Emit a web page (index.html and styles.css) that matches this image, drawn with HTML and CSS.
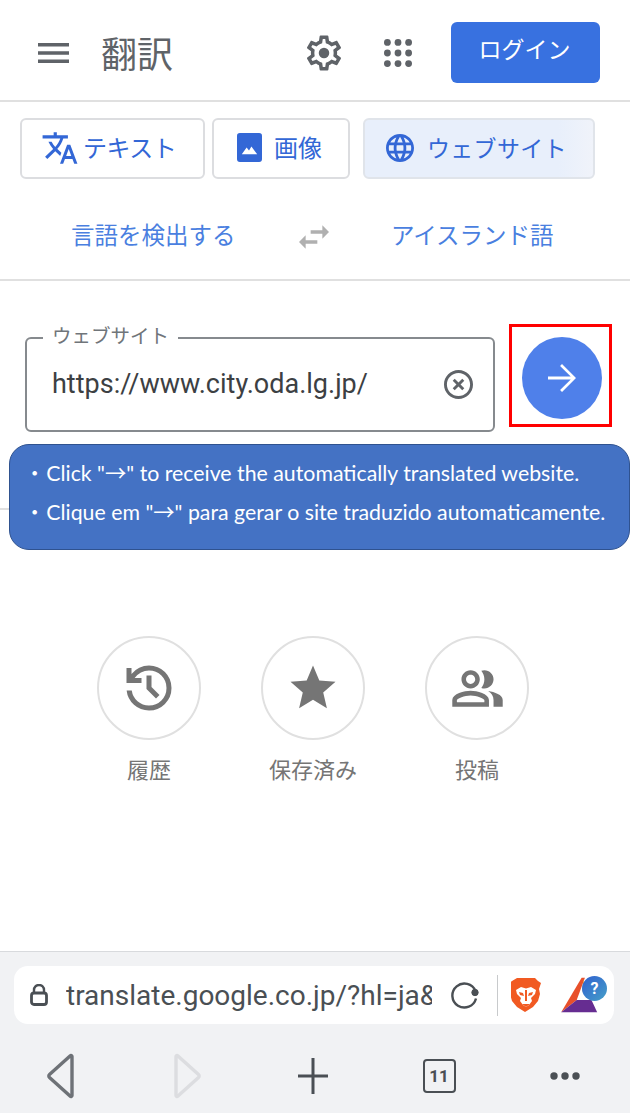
FILE: index.html
```html
<!DOCTYPE html>
<html lang="ja">
<head>
    <meta charset="UTF-8">
    <meta name="viewport" content="width=device-width, initial-scale=1.0">
    <title>翻訳</title>
    <link rel="stylesheet" href="styles.css">
</head>
<body>

<div class="page">
    <header class="topbar">
        <svg class="icon-menu" viewBox="0 0 31 20"><path d="M0 0h31v3.4H0zM0 8.3h31v3.4H0zM0 16.6h31V20H0z"/></svg>
        <h1 class="title">翻訳</h1>
        <svg class="icon-gear" viewBox="0 0 24 24"><path d="M19.43 12.98c.04-.32.07-.64.07-.98 0-.34-.03-.66-.07-.98l2.11-1.65c.19-.15.24-.42.12-.64l-2-3.46c-.09-.16-.26-.25-.44-.25-.06 0-.12.01-.17.03l-2.49 1c-.52-.4-1.08-.73-1.69-.98l-.38-2.65C14.46 2.18 14.25 2 14 2h-4c-.25 0-.46.18-.49.42l-.38 2.65c-.61.25-1.17.59-1.69.98l-2.49-1c-.06-.02-.12-.03-.18-.03-.17 0-.34.09-.43.25l-2 3.46c-.13.22-.07.49.12.64l2.11 1.65c-.04.32-.07.65-.07.98 0 .33.03.66.07.98l-2.11 1.65c-.19.15-.24.42-.12.64l2 3.46c.09.16.26.25.44.25.06 0 .12-.01.17-.03l2.49-1c.52.4 1.08.73 1.69.98l.38 2.65c.03.24.24.42.49.42h4c.25 0 .46-.18.49-.42l.38-2.65c.61-.25 1.17-.59 1.69-.98l2.49 1c.06.02.12.03.18.03.17 0 .34-.09.43-.25l2-3.46c.12-.22.07-.49-.12-.64l-2.11-1.65zm-1.98-1.71c.04.31.05.52.05.73 0 .21-.02.43-.05.73l-.14 1.13.89.7 1.08.84-.7 1.21-1.27-.51-1.04-.42-.9.68c-.43.32-.84.56-1.25.73l-1.06.43-.16 1.13-.2 1.35h-1.4l-.19-1.35-.16-1.13-1.06-.43c-.43-.18-.83-.41-1.23-.71l-.91-.7-1.06.43-1.27.51-.7-1.21 1.08-.84.89-.7-.14-1.13c-.03-.31-.05-.54-.05-.74s.02-.43.05-.73l.14-1.13-.89-.7-1.08-.84.7-1.21 1.27.51 1.04.42.9-.68c.43-.32.84-.56 1.25-.73l1.06-.43.16-1.13.2-1.35h1.39l.19 1.35.16 1.13 1.06.43c.43.18.83.41 1.23.71l.91.7 1.06-.43 1.27-.51.7 1.21-1.07.85-.89.7.14 1.13z"/><circle cx="12" cy="12" r="3"/></svg>
        <svg class="icon-apps" viewBox="0 0 28 28"><circle cx="3.4" cy="3.4" r="3.4"/><circle cx="14" cy="3.4" r="3.4"/><circle cx="24.6" cy="3.4" r="3.4"/><circle cx="3.4" cy="14" r="3.4"/><circle cx="14" cy="14" r="3.4"/><circle cx="24.6" cy="14" r="3.4"/><circle cx="3.4" cy="24.6" r="3.4"/><circle cx="14" cy="24.6" r="3.4"/><circle cx="24.6" cy="24.6" r="3.4"/></svg>
        <button class="login">ログイン</button>
    </header>

    <nav class="tabs">
        <div class="tab tab-text">
            <svg class="tab-icon" viewBox="0 0 24 24"><path d="M12.87 15.07l-2.54-2.51.03-.03c1.74-1.94 2.98-4.17 3.71-6.53H17V4h-7V2H8v2H1v1.99h11.17C11.5 7.92 10.44 9.75 9 11.35 8.07 10.32 7.3 9.19 6.69 8h-2c.73 1.63 1.73 3.17 2.98 4.56l-5.09 5.02L4 19l5-5 3.11 3.11.76-2.04zM18.5 10h-2L12 22h2l1.12-3h4.75L21 22h2l-4.5-12zm-2.62 7l1.62-4.33L19.12 17h-3.24z"/></svg>
            テキスト
        </div>
        <div class="tab tab-image">
            <svg class="tab-icon" viewBox="0 0 26 30"><rect width="26" height="30" rx="3"/><path fill="#fff" d="M5 22l5-7 2.5 3 2.5-4 6 8z"/></svg>
            画像
        </div>
        <div class="tab tab-site">
            <svg class="tab-icon" viewBox="2 2 20 20"><path d="M11.99 2C6.47 2 2 6.48 2 12s4.47 10 9.99 10C17.52 22 22 17.52 22 12S17.52 2 11.99 2zm6.93 6h-2.95c-.32-1.25-.78-2.45-1.38-3.56 1.84.63 3.37 1.91 4.33 3.56zM12 4.04c.83 1.2 1.48 2.53 1.91 3.96h-3.82c.43-1.43 1.08-2.76 1.91-3.96zM4.26 14C4.1 13.36 4 12.69 4 12s.1-1.36.26-2h3.38c-.08.66-.14 1.32-.14 2 0 .68.06 1.34.14 2H4.26zm.82 2h2.95c.32 1.25.78 2.45 1.38 3.56-1.84-.63-3.37-1.9-4.33-3.56zm2.95-8H5.08c.96-1.66 2.49-2.93 4.33-3.56C8.81 5.55 8.35 6.75 8.03 8zM12 19.96c-.83-1.2-1.48-2.53-1.91-3.96h3.82c-.43 1.43-1.08 2.76-1.91 3.96zM14.34 14H9.66c-.09-.66-.16-1.32-.16-2 0-.68.07-1.35.16-2h4.68c.09.65.16 1.32.16 2 0 .68-.07 1.34-.16 2zm.25 5.56c.6-1.11 1.06-2.31 1.38-3.56h2.95c-.96 1.65-2.49 2.93-4.33 3.56zM16.36 14c.08-.66.14-1.32.14-2 0-.68-.06-1.34-.14-2h3.38c.16.64.26 1.31.26 2s-.1 1.36-.26 2h-3.38z"/></svg>
            ウェブサイト
        </div>
    </nav>

    <div class="langs">
        <span class="lang">言語を検出する</span>
        <svg class="icon-swap" viewBox="3 5 18 14"><path d="M6.99 11L3 15l3.99 4v-3H14v-2H6.99v-3zM21 9l-3.99-4v3H10v2h7.01v3L21 9z"/></svg>
        <span class="lang">アイスランド語</span>
    </div>

    <section class="site-entry">
        <div class="site-field">
            <span class="site-label">ウェブサイト</span>
            <span class="site-url">https://www.city.oda.lg.jp/</span>
            <svg class="icon-clear" viewBox="2 2 20 20"><path d="M14.59 8L12 10.59 9.41 8 8 9.41 10.59 12 8 14.59 9.41 16 12 13.41 14.59 16 16 14.59 13.41 12 16 9.41 14.59 8zM12 2C6.47 2 2 6.47 2 12s4.47 10 10 10 10-4.47 10-10S17.53 2 12 2zm0 18c-4.41 0-8-3.59-8-8s3.59-8 8-8 8 3.59 8 8-3.59 8-8 8z"/></svg>
        </div>
        <button class="go">
            <svg class="icon-go" viewBox="4 4 16 16"><path d="M12 4l-1.1 1.1L17 11.2H4v1.6h13l-6.100 6.100L12 20l8-8z"/></svg>
        </button>
    </section>

    <div class="shortcuts">
        <div class="shortcut">
            <div class="shortcut-ring">
                <svg class="icon-history" viewBox="0 0 24 24"><path d="M12 21q-3.45 0-6.012-2.288T3.05 13H5.100q.35 2.6 2.313 4.3T12 19q2.925 0 4.963-2.038T19 12q0-2.925-2.037-4.962T12 5q-1.725 0-3.225.8T6.250 8H9v2H3V4h2v2.350q1.275-1.600 3.113-2.475T12 3q3.750 0 6.375 2.625T21 12q0 3.750-2.625 6.375T12 21Zm2.800-4.800L11 12.400V7h2v4.600l3.200 3.200-1.400 1.400Z"/></svg>
            </div>
            <span>履歴</span>
        </div>
        <div class="shortcut">
            <div class="shortcut-ring">
                <svg class="icon-star" viewBox="0 0 24 24"><path d="M12 17.27L18.18 21l-1.64-7.03L22 9.24l-7.19-.61L12 2 9.19 8.63 2 9.24l5.46 4.73L5.82 21z"/></svg>
            </div>
            <span>保存済み</span>
        </div>
        <div class="shortcut">
            <div class="shortcut-ring">
                <svg class="icon-people" viewBox="0 0 24 24"><path d="M16.67 13.13C18.04 14.06 19 15.32 19 17v3h4v-3c0-2.180-3.570-3.470-6.330-3.870zM15 12c2.210 0 4-1.790 4-4s-1.790-4-4-4c-.47 0-.91.1-1.330.24C14.500 5.270 15 6.580 15 8s-.5 2.730-1.330 3.760c.42.14.86.24 1.330.24zM9 12c2.210 0 4-1.790 4-4s-1.790-4-4-4-4 1.790-4 4 1.790 4 4 4zm0-6c1.100 0 2 .9 2 2s-.9 2-2 2-2-.9-2-2 .9-2 2-2zM9 13c-2.670 0-8 1.340-8 4v3h16v-3c0-2.660-5.330-4-8-4zm6 5H3v-.99C3.200 16.290 6.300 15 9 15s5.800 1.290 6 2z"/></svg>
            </div>
            <span>投稿</span>
        </div>
    </div>

    <!-- callout pasted over the screenshot -->
    <div class="callout">
        <p><span class="dot">・</span>Click "<span class="arrow">→</span>" to receive the automatically translated website.</p>
        <p><span class="dot">・</span>Clique em "<span class="arrow">→</span>" para gerar o site traduzido automaticamente.</p>
    </div>
    <div class="marker"></div>
</div>

<footer class="browser">
    <div class="address">
        <svg class="icon-lock" viewBox="0 0 18 22"><path d="M4 9V6a5 5 0 0 1 10 0v3" fill="none" stroke-width="2.400"/><rect x="1.500" y="9" width="15" height="11.500" rx="2.500" fill="none" stroke-width="2.800"/></svg>
        <span class="address-url">translate.google.co.jp/?hl=ja&amp;sl=auto</span>
        <svg class="icon-reload" viewBox="0 0 30 30"><path d="M25.500 11A12 12 0 1 0 26 18.500" fill="none" stroke-width="2.400"/><circle cx="25" cy="12.500" r="3.200"/></svg>
        <span class="address-sep"></span>
        <svg class="icon-brave" viewBox="0 0 30 36"><path fill="#f15a22" d="M6 1h18l3 3 3 2-2 6 1 5-2 7-5 6-8 5-8-5-5-6-2-7 1-5-2-6 3-2z"/><path fill="#fff" d="M5 13l5-3 5 1.500 5-1.500 5 3-1 4-4 4 1 3-3 4-3 2-3-2-3-4 1-3-4-4z"/><path fill="#f15a22" d="M8 15l4 1 1 3-4-1zM22 15l-4 1-1 3 4-1zM14 13h2v11h-2zM11 27h8l-4 3z"/></svg>
        <div class="rewards">
            <svg class="icon-rewards" viewBox="0 0 46 44"><path fill="#e8502a" d="M0 43L25 1h4L19 28z"/><path fill="#f7a01c" d="M27 3l3 12-4 3z"/><path fill="#662d91" d="M0 43l19-15h18l7 15z"/></svg>
            <span class="rewards-badge">?</span>
        </div>
    </div>
    <div class="browser-nav">
        <svg class="nav-icon nav-back" viewBox="0 0 30 46"><path d="M26 3.500v39a1 1 0 0 1-1.700.7L3.500 24.500a2 2 0 0 1 0-3L24.300 2.800A1 1 0 0 1 26 3.500z"/></svg>
        <svg class="nav-icon nav-forward" viewBox="0 0 30 46"><path d="M4 3.500v39a1 1 0 0 0 1.700.7L26.500 24.500a2 2 0 0 0 0-3L5.700 2.800A1 1 0 0 0 4 3.500z"/></svg>
        <svg class="nav-icon nav-plus" viewBox="0 0 30 36"><path d="M15 0v36M0 18h30"/></svg>
        <div class="tab-count">11</div>
        <svg class="nav-more" viewBox="0 0 30 8"><circle cx="4" cy="4" r="3.700"/><circle cx="15" cy="4" r="3.700"/><circle cx="26" cy="4" r="3.700"/></svg>
    </div>
</footer>

</body>
</html>
```

FILE: styles.css
```css
* {
    box-sizing: border-box;
}

html, body {
    height: 100%;
}

body {
    margin: 0;
    height: 1113px;
    display: flex;
    flex-direction: column;
    overflow: hidden;
    background-color: white;
    font-family: Roboto, "Noto Sans CJK JP", sans-serif;
}

.page {
    position: relative;
    flex: 1;
}

/* top bar */
.topbar {
    height: 102px;
    display: flex;
    align-items: center;
    padding: 5px 30px 0 38px;
    border-bottom: 2px solid #e0e0e0;
}

.icon-menu {
    width: 31px;
    height: 20px;
    fill: #5f6368;
}

.title {
    margin: 6px 0 0 32px;
    flex: 1;
    font-size: 36px;
    font-weight: 400;
    line-height: 40px;
    color: #5f6368;
}

.icon-gear {
    width: 42px;
    height: 42px;
    fill: #5f6368;
}

.icon-apps {
    width: 28px;
    height: 28px;
    margin-left: 39px;
    fill: #5f6368;
}

.login {
    width: 149px;
    height: 61px;
    margin-left: 39px;
    padding: 0 2px 10px 0;
    border: none;
    border-radius: 6px;
    background-color: #3871e0;
    color: white;
    font-family: inherit;
    font-size: 23px;
}

/* mode tabs */
.tabs {
    display: flex;
    margin-top: 16px;
    padding-left: 20px;
}

.tab {
    height: 61px;
    display: flex;
    align-items: center;
    padding-bottom: 4px;
    border: 2px solid #dcdde0;
    border-radius: 6px;
    color: #3367d6;
    font-size: 24px;
}

.tab-text {
    width: 185px;
    padding-left: 19px;
    letter-spacing: -0.5px;
}

.tab-image {
    width: 138px;
    margin-left: 7px;
    padding-left: 23px;
}

.tab-site {
    width: 232px;
    margin-left: 13px;
    padding-left: 21px;
    background: linear-gradient(90deg, #e8effb 85%, #f0f3fa);
    border-color: #e0e4ea;
    font-size: 23px;
    letter-spacing: 0.3px;
}

.tab-icon {
    flex: none;
    fill: #3367d6;
}

.tab-text .tab-icon {
    width: 38px;
    height: 38px;
    margin: 2px 4px 0 0;
}

.tab-image .tab-icon {
    width: 25px;
    height: 29px;
    margin: 2px 12px 0 0;
}

.tab-site .tab-icon {
    width: 28px;
    height: 28px;
    margin: 2px 13px 0 0;
}

/* language row */
.langs {
    height: 102px;
    display: grid;
    grid-template-columns: 162px 30px 162px;
    column-gap: 64px;
    justify-content: center;
    align-items: center;
    padding: 9px 6px 0 0;
    border-bottom: 2px solid #e0e0e0;
}

.lang {
    font-size: 23.5px;
    white-space: nowrap;
    color: #4a7fe0;
}

.icon-swap {
    width: 30px;
    height: 24px;
    margin: 7px 0 0 2px;
    fill: #b0b0b0;
}

/* website field */
.site-entry {
    height: 229px;
    display: flex;
    align-items: flex-start;
    padding: 56px 0 0 25px;
    border-bottom: 2px solid #e0e0e0;
}

.site-field {
    position: relative;
    width: 470px;
    height: 95px;
    display: flex;
    align-items: center;
    padding: 0 20px 0 25px;
    border: 2px solid #868a8e;
    border-radius: 6px;
}

.site-label {
    position: absolute;
    top: -15px;
    left: 16px;
    padding: 0 9px;
    background-color: white;
    font-size: 19.5px;
    line-height: 26px;
    color: #70757a;
}

.site-url {
    flex: 1;
    margin-bottom: 1px;
    font-size: 27px;
    color: #3c4043;
}

.icon-clear {
    width: 29px;
    height: 29px;
    fill: #5f6368;
}

.go {
    width: 80px;
    height: 82px;
    margin-left: 27px;
    padding: 0;
    display: flex;
    align-items: center;
    justify-content: center;
    border: none;
    border-radius: 50%;
    background-color: #4f80ea;
}

.icon-go {
    width: 28px;
    height: 28px;
    fill: white;
}

/* shortcuts */
.shortcuts {
    display: flex;
    justify-content: center;
    gap: 60px;
    margin-top: 126px;
    padding-right: 4px;
}

.shortcut {
    width: 104px;
    display: flex;
    flex-direction: column;
    align-items: center;
    font-size: 22px;
    color: #757575;
}

.shortcut span {
    margin-top: 16px;
    line-height: 30px;
    white-space: nowrap;
}

.shortcut-ring {
    width: 104px;
    height: 104px;
    display: flex;
    align-items: center;
    justify-content: center;
    border: 2px solid #e0e0e0;
    border-radius: 50%;
}

.shortcut-ring svg {
    fill: #757575;
}

.icon-history {
    width: 60px;
    height: 60px;
}

.icon-star {
    width: 54px;
    height: 54px;
}

.icon-people {
    width: 55px;
    height: 55px;
}

/* pasted callout and red marker */
.callout {
    position: absolute;
    top: 444px;
    left: 9px;
    width: 621px;
    height: 106px;
    padding: 8px 0 0 14px;
    border: 1px solid #2f528f;
    border-radius: 20px;
    background-color: #4472c4;
    color: white;
    font-family: Lato, sans-serif;
    font-size: 21.3px;
}

.callout p {
    margin: 0;
    line-height: 38px;
    white-space: nowrap;
}

.dot {
    margin-right: 1px;
    font-family: "Noto Sans CJK JP", sans-serif;
}

.arrow {
    font-family: "Noto Sans CJK JP", sans-serif;
}

.marker {
    position: absolute;
    top: 324px;
    left: 509px;
    width: 103px;
    height: 103px;
    border: 3px solid #ff0000;
}

/* browser chrome */
.browser {
    height: 162px;
    flex: none;
    padding: 14px 16px 0 14px;
    border-top: 1px solid #d8dadd;
    background-color: #f1f2f4;
}

.address {
    height: 58px;
    display: flex;
    align-items: center;
    padding-left: 16px;
    border-radius: 14px;
    background-color: white;
}

.icon-lock {
    width: 18px;
    height: 22px;
    flex: none;
    stroke: #4a4f54;
}

.address-url {
    width: 366px;
    margin-left: 18px;
    overflow: hidden;
    white-space: nowrap;
    font-size: 28px;
    color: #4a4f54;
}

.icon-reload {
    width: 30px;
    height: 30px;
    flex: none;
    margin-left: 18px;
    stroke: #4a4f54;
    fill: #4a4f54;
}

.icon-reload path {
    fill: none;
}

.address-sep {
    width: 1px;
    height: 41px;
    margin-left: 17px;
    background-color: #c8cacc;
}

.icon-brave {
    width: 30px;
    height: 36px;
    flex: none;
    margin-left: 13px;
}

.rewards {
    position: relative;
    width: 50px;
    height: 40px;
    margin-left: 19px;
}

.icon-rewards {
    width: 40px;
    height: 36px;
    margin-top: 2px;
    display: block;
}

.rewards-badge {
    position: absolute;
    top: 1px;
    right: 3px;
    width: 25px;
    height: 25px;
    border-radius: 50%;
    background: linear-gradient(135deg, #2f5fd0, #46a0c8);
    color: white;
    font-size: 16px;
    font-weight: 700;
    line-height: 25px;
    text-align: center;
}

.browser-nav {
    display: grid;
    grid-template-columns: repeat(5, 126px);
    justify-items: center;
    align-items: center;
    margin: 29px 0 0 -16px;
}

.nav-icon {
    fill: none;
    stroke-width: 3.400;
}

.nav-back {
    width: 30px;
    height: 46px;
    stroke: #6e7277;
}

.nav-forward {
    width: 30px;
    height: 46px;
    stroke: #dcdde0;
}

.nav-plus {
    width: 30px;
    height: 36px;
    stroke: #4a4f54;
    stroke-width: 3;
}

.tab-count {
    width: 33px;
    height: 34px;
    border: 2px solid #4a4f54;
    border-radius: 4px;
    color: #4a4f54;
    font-size: 17px;
    font-weight: 700;
    line-height: 30px;
    text-align: center;
}

.nav-more {
    width: 30px;
    height: 8px;
    fill: #4a4f54;
}
```
